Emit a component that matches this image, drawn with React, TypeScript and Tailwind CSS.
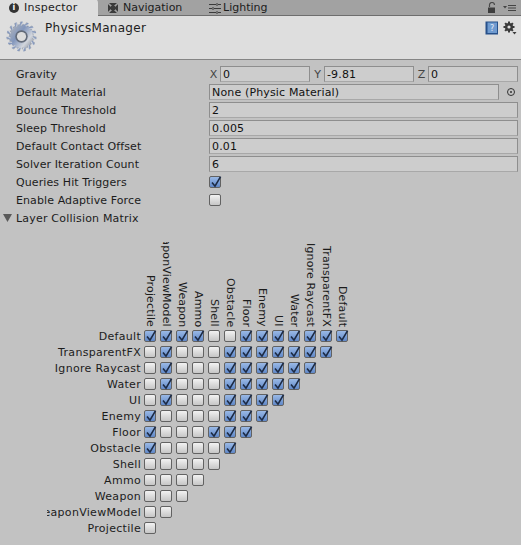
const FONT = "font-['DejaVu_Sans',sans-serif]";

const LAYERS = [
  "Default",
  "TransparentFX",
  "Ignore Raycast",
  "Water",
  "UI",
  "Enemy",
  "Floor",
  "Obstacle",
  "Shell",
  "Ammo",
  "Weapon",
  "WeaponViewModel",
  "Projectile",
];

// rows top to bottom, columns left to right (Projectile ... Default)
const MATRIX = [
  "1111001111111",
  "010001111111",
  "01000111111",
  "0100011111",
  "010001111",
  "10000111",
  "1000111",
  "100001",
  "00000",
  "0000",
  "000",
  "00",
  "0",
];

function Checkbox({ on }: { on?: boolean }) {
  return (
    <span
      className={`relative block h-[12px] w-[12px] rounded-[2px] border border-[#626262] ${
        on
          ? "bg-gradient-to-b from-[#9ab9e6] to-[#6088c8]"
          : "bg-gradient-to-b from-[#f2f2f2] to-[#c6c6c6]"
      }`}
    >
      {on && (
        <svg viewBox="0 0 14 14" className="absolute -left-[1px] -top-[2px] h-[14px] w-[14px]">
          <path d="M3 7.6 L6 11.2 L11.6 1.6" fill="none" stroke="#1c2a44" strokeWidth="1.6" />
        </svg>
      )}
    </span>
  );
}

function Field({ children }: { children: React.ReactNode }) {
  return (
    <div className="flex h-[16px] min-w-0 flex-1 items-center border border-[#8e8e8e] border-b-[#a8a8a8] bg-[#cdcdcd] pl-[2px] text-[11px] leading-none tracking-[0.15px] text-[#111]">
      {children}
    </div>
  );
}

function Row({ label, children }: { label: string; children?: React.ReactNode }) {
  return (
    <div className="flex h-[18px] items-center">
      <div className="w-[209px] shrink-0 pl-[16px] text-[11px] leading-none tracking-[0.1px] text-[#1c1c1c]">{label}</div>
      <div className="flex min-w-0 flex-1 items-center">{children}</div>
    </div>
  );
}

function Axis({ name, value }: { name: string; value: string }) {
  return (
    <div className="flex min-w-0 flex-1 items-center gap-[1px]">
      <span className="w-[11px] shrink-0 text-center text-[11px] leading-none text-[#444]">{name}</span>
      <Field>{value}</Field>
    </div>
  );
}

function GearIcon() {
  return (
    <svg viewBox="0 0 32 32" className="h-[32px] w-[32px]">
      <defs>
        <linearGradient id="gear" x1="0" y1="0.1" x2="1" y2="0.9">
          <stop offset="0" stopColor="#b4b6ba" />
          <stop offset="0.4" stopColor="#8296bc" />
          <stop offset="0.72" stopColor="#d2d6dd" />
          <stop offset="1" stopColor="#7b8290" />
        </linearGradient>
      </defs>
      <g fill="url(#gear)">
        <circle cx="15.5" cy="15.5" r="12.6" />
        {[0, 24, 48, 72, 96, 120, 144, 168, 192, 216, 240, 264, 288, 312, 336].map((a) => (
          <rect key={a} x="13.9" y="0.4" width="3.2" height="4" rx="0.8" transform={`rotate(${a} 15.5 15.5)`} />
        ))}
      </g>
      <circle cx="15.5" cy="15.5" r="6.2" fill="#626a78" />
      <circle cx="15.5" cy="15.5" r="4.6" fill="#dcdcdc" />
    </svg>
  );
}

function NavIcon() {
  return (
    <svg viewBox="0 0 12 12" className="h-[12px] w-[12px]">
      <rect x="1" y="1" width="10" height="10" fill="#3b3b3b" />
      <path d="M1 1 L11 11 M11 1 L1 11" stroke="#a2a2a2" strokeWidth="1.6" />
      <rect x="4" y="4" width="4" height="4" fill="#3b3b3b" />
    </svg>
  );
}

function LightingIcon() {
  return (
    <svg viewBox="0 0 12 12" className="h-[12px] w-[12px]" fill="none" stroke="#3b3b3b" strokeWidth="1">
      <path d="M0 2.5 H7 M9 2.5 H12 M0 6.5 H3 M5 6.5 H12 M0 10.5 H7 M9 10.5 H12 M8 1 V4 M4 5 V8 M8 9 V12" />
    </svg>
  );
}

function HelpIcon() {
  return (
    <svg viewBox="0 0 14 14" className="h-[14px] w-[14px]">
      <rect x="0.5" y="0.5" width="12.5" height="13" fill="#27508a" />
      <rect x="2.5" y="1.5" width="9.5" height="10.5" fill="#6f9bd0" />
      <text x="7.2" y="10" textAnchor="middle" fontSize="8" fill="#e4edf8" fontFamily="DejaVu Sans">?</text>
    </svg>
  );
}

function SettingsIcon() {
  return (
    <svg viewBox="0 0 14 14" className="h-[14px] w-[14px]">
      <g fill="#3a3a3a">
        <circle cx="6" cy="6" r="4" />
        {[0, 45, 90, 135, 180, 225, 270, 315].map((a) => (
          <rect key={a} x="5" y="0.5" width="2" height="3" transform={`rotate(${a} 6 6)`} />
        ))}
      </g>
      <circle cx="6" cy="6" r="1.6" fill="#dedede" />
      <path d="M9.5 11 H13.5 L11.5 13.5 Z" fill="#3a3a3a" />
    </svg>
  );
}

function LockIcon() {
  return (
    <svg viewBox="0 0 10 12" className="h-[12px] w-[10px]">
      <path d="M2.5 5 V3 a2.5 2.5 0 0 1 5 0" fill="none" stroke="#4a4a4a" strokeWidth="1.2" />
      <rect x="1" y="5.5" width="7" height="5.5" fill="#3e3e3e" />
    </svg>
  );
}

function MenuIcon() {
  return (
    <svg viewBox="0 0 14 8" className="h-[8px] w-[14px]">
      <path d="M0 2 H4 L2 4.5 Z" fill="#444" />
      <path d="M5 1.5 H13 M5 4 H13 M5 6.5 H13" stroke="#444" strokeWidth="1" />
    </svg>
  );
}

export default function App() {
  return (
    <div className={`${FONT} flex h-[545px] w-[521px] flex-col overflow-hidden bg-[#c2c2c2]`}>
      {/* Tabs */}
      <div className="flex h-[16px] shrink-0 items-end border-b border-[#6e6e6e] bg-[#a2a2a2] text-[11px] leading-none text-[#1c1c1c]">
        <div className="-mb-px flex h-[17px] w-[98px] items-center gap-[5px] rounded-tr-[4px] bg-[#dedede] pl-[9px] tracking-[0.25px]">
          <span className="flex h-[10px] w-[10px] items-center justify-center rounded-full bg-[#333] text-[8px] font-bold text-white">i</span>
          Inspector
        </div>
        <div className="flex h-full w-[111px] items-center gap-[4px] pl-[9px]">
          <NavIcon />
          Navigation
        </div>
        <div className="flex h-full flex-1 items-center gap-[2px]">
          <LightingIcon />
          Lighting
        </div>
        <div className="flex h-full items-center gap-[6px] pr-[4px]">
          <LockIcon />
          <MenuIcon />
        </div>
      </div>

      {/* Header */}
      <div className="flex h-[44px] shrink-0 items-start border-b border-[#858585] bg-[#dedede]">
        <div className="ml-[6px] mt-[5px] w-[33px] shrink-0">
          <GearIcon />
        </div>
        <div className="ml-[6px] mt-[6px] flex-1 text-[12px] leading-none tracking-[0.3px] text-[#222]">PhysicsManager</div>
        <div className="mr-[4px] mt-[5px] flex items-center gap-[4px]">
          <HelpIcon />
          <SettingsIcon />
        </div>
      </div>

      {/* Settings */}
      <div className="flex flex-col pr-[3px] pt-[5px]">
        <Row label="Gravity">
          <div className="-ml-px flex flex-1 gap-[2px]">
            <Axis name="X" value="0" />
            <Axis name="Y" value="-9.81" />
            <Axis name="Z" value="0" />
          </div>
        </Row>
        <Row label="Default Material">
          <Field>None (Physic Material)</Field>
          <span className="flex w-[19px] shrink-0 items-center justify-end pr-[3px]">
            <span className="flex h-[8px] w-[8px] items-center justify-center rounded-full border border-[#333]">
              <span className="h-[2px] w-[2px] rounded-full bg-[#333]" />
            </span>
          </span>
        </Row>
        <Row label="Bounce Threshold">
          <Field>2</Field>
        </Row>
        <Row label="Sleep Threshold">
          <Field>0.005</Field>
        </Row>
        <Row label="Default Contact Offset">
          <Field>0.01</Field>
        </Row>
        <Row label="Solver Iteration Count">
          <Field>6</Field>
        </Row>
        <Row label="Queries Hit Triggers">
          <Checkbox on />
        </Row>
        <Row label="Enable Adaptive Force">
          <Checkbox />
        </Row>
        <div className="flex h-[18px] items-center text-[11px] leading-none tracking-[0.2px] text-[#1c1c1c]">
          <svg viewBox="0 0 9 8" className="ml-[3px] mr-[4px] h-[8px] w-[9px]">
            <path d="M0 0 H9 L4.5 8 Z" fill="#5a5a5a" />
          </svg>
          Layer Collision Matrix
        </div>
      </div>

      {/* Matrix */}
      <div className="mt-[15px] pl-[140px]">
        <div className="flex h-[86px] items-stretch text-[11px] leading-none tracking-[0.15px] text-[#1c1c1c]">
          {[...LAYERS].reverse().map((name) => (
            <div key={name} className="flex h-full w-[16px] flex-col justify-end overflow-hidden pb-[1px]">
              <span className="shrink-0 whitespace-nowrap [writing-mode:vertical-rl]">{name}</span>
            </div>
          ))}
        </div>
      </div>
      <div className="flex flex-col">
        {LAYERS.map((name, r) => (
          <div key={name} className="flex h-[16px] items-center">
            <div className="ml-[47px] flex w-[94px] shrink-0 justify-end overflow-hidden text-[11px] leading-none tracking-[0.3px] text-[#1c1c1c]">
              <span className="shrink-0 whitespace-nowrap">{name}</span>
            </div>
            <div className="ml-[1px] flex">
              {MATRIX[r].split("").map((c, i) => (
                <div key={i} className="flex w-[16px] justify-center">
                  <Checkbox on={c === "1"} />
                </div>
              ))}
            </div>
          </div>
        ))}
      </div>
    </div>
  );
}
